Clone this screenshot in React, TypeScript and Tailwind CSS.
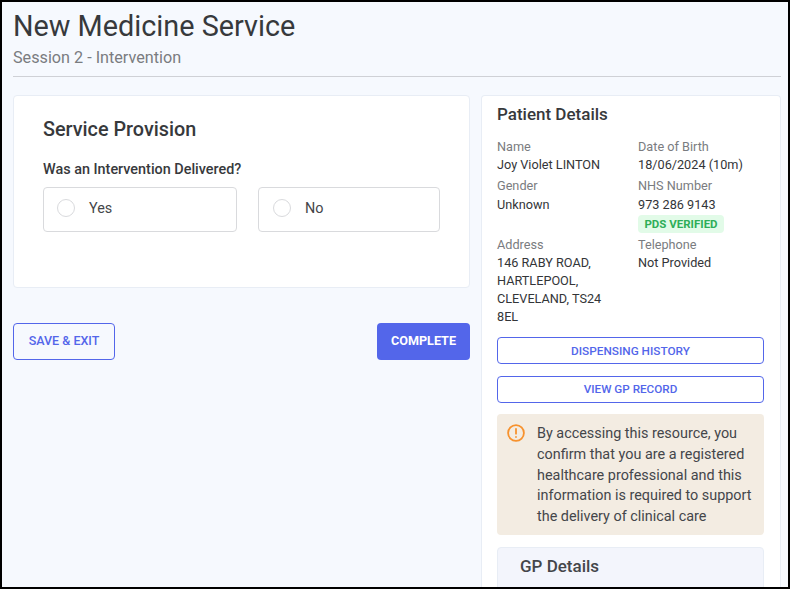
import React from "react"

const Field = ({ label, children, className = "" }: { label: string; children: React.ReactNode; className?: string }) => (
  <div className={className}>
    <div className="text-[12.7px] leading-[18px] text-[#7a7c80]">{label}</div>
    <div className="text-[12.7px] leading-[18px] text-[#333538]">{children}</div>
  </div>
)

const RadioBox = ({ label, box }: { label: string; box: string }) => (
  <div className={`flex h-[45px] items-start rounded border border-[#d9dadd] bg-white pt-[11px] ${box}`}>
    <span className="h-[18px] w-[18px] rounded-full border border-[#d9dadd]" />
    <span className="ml-[14px] mt-[1px] text-[14.4px] leading-[18px] text-[#44464a]">{label}</span>
  </div>
)

export default function App() {
  return (
    <div className="h-[589px] w-[790px] overflow-hidden border-2 border-black bg-[#f6f9fe] font-['Roboto',sans-serif]">
      <div className="pl-[11px] pr-[7px]">
        <h1 className="pt-[5px] text-[28.8px] leading-[38px] text-[#37393c]">New Medicine Service</h1>
        <p className="pt-[1px] text-[16.2px] leading-[24px] text-[#7a7c80]">Session 2 - Intervention</p>
        <div className="mt-[6px] h-px bg-[#cfd1d6]" />

        <div className="mt-[18px] flex items-start gap-[11px]">
          <div className="w-[457px]">
            <div className="h-[193px] rounded border border-[#e8edf5] bg-white pl-[29px] pt-[22px]">
              <h2 className="text-[19.8px] font-medium leading-[24px] text-[#37393c]">Service Provision</h2>
              <p className="mt-[18px] text-[14.4px] font-medium leading-[20px] text-[#37393c]">Was an Intervention Delivered?</p>
              <div className="mt-[7px] flex gap-[21px]">
                <RadioBox label="Yes" box="w-[194px] pl-[13px]" />
                <RadioBox label="No" box="w-[182px] pl-[14px]" />
              </div>
            </div>
            <div className="mt-[35px] flex justify-between">
              <button className="h-[37px] w-[102px] rounded border border-[#5366ea] text-[12.5px] font-medium text-[#5366ea]">SAVE &amp; EXIT</button>
              <button className="h-[37px] w-[93px] rounded bg-[#5366ea] text-[12.6px] font-bold text-white">COMPLETE</button>
            </div>
          </div>

          <div className="w-[300px] rounded-t border border-b-0 border-[#e8edf5] bg-white px-[15px] pt-[7px]">
            <h2 className="text-[17px] font-medium leading-[22px] text-[#37393c]">Patient Details</h2>
            <div className="mt-[13px] grid grid-cols-[141px_1fr] gap-y-[2px]">
              <Field label="Name">Joy Violet LINTON</Field>
              <Field label="Date of Birth">18/06/2024 (10m)</Field>
              <Field label="Gender" className="mt-[1px]">
                <span className="block pt-[1px]">Unknown</span>
              </Field>
              <div className="mt-[1px]">
                <Field label="NHS Number">
                  <span className="block pt-[1px]">973 286 9143</span>
                </Field>
                <span className="mt-[1px] block h-[18px] w-[86px] rounded bg-[#e2fbe8] text-center text-[11.5px] font-bold leading-[18px] text-[#2eae58]">PDS VERIFIED</span>
              </div>
              <Field label="Address" className="mt-[1px]">
                <span className="block w-[112px]">146 RABY ROAD, HARTLEPOOL, CLEVELAND, TS24 8EL</span>
              </Field>
              <Field label="Telephone" className="mt-[1px]">Not Provided</Field>
            </div>
            <button className="mt-[11px] block h-[27px] w-[267px] rounded border border-[#5366ea] pt-[2px] text-[11.8px] font-medium text-[#5366ea]">DISPENSING HISTORY</button>
            <button className="mt-[12px] block h-[27px] w-[267px] rounded border border-[#5366ea] text-[11.7px] font-medium text-[#5366ea]">VIEW GP RECORD</button>
            <div className="mt-[11px] flex h-[121px] w-[267px] rounded bg-[#f3ece2] pl-[10px] pt-[9px]">
              <svg viewBox="0 0 18 18" className="mt-[1px] h-[18px] w-[18px] shrink-0" fill="none" stroke="#f7922e" strokeWidth="1.8" strokeLinecap="round">
                <circle cx="9" cy="9" r="7.9" />
                <path d="M9 4.8v4.9M9 12.9v.2" />
              </svg>
              <p className="ml-[12px] w-[226px] pt-[1px] text-[14.4px] leading-[20.8px] text-[#44464a]">By accessing this resource, you confirm that you are a registered healthcare professional and this information is required to support the delivery of clinical care</p>
            </div>
            <div className="mt-[12px] h-[60px] w-[267px] rounded border border-[#e8edf5] bg-[#f3f5fc] pl-[22px] pt-[7px]">
              <h3 className="text-[17px] font-medium leading-[22px] text-[#44464a]">GP Details</h3>
            </div>
          </div>
        </div>
      </div>
    </div>
  )
}
